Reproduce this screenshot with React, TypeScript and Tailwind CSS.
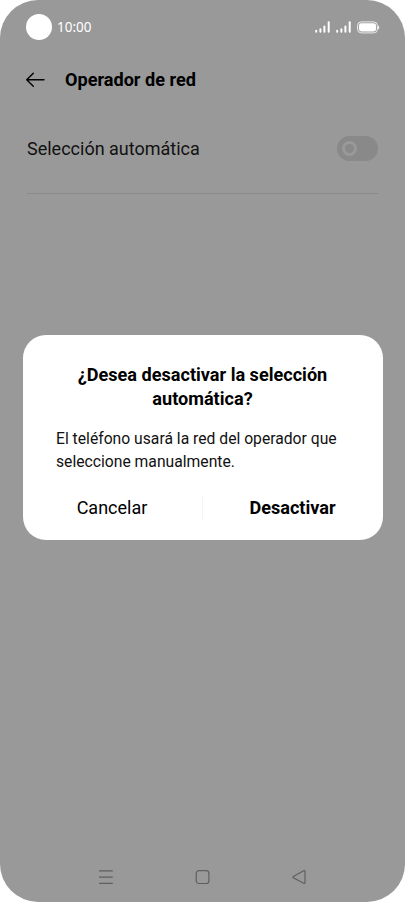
import type { ReactNode } from 'react'

const SignalIcon = () => (
  <svg width="16" height="12" viewBox="0 0 16 12" stroke="#fff" strokeWidth="2" strokeLinecap="round">
    <path d="M1.2 9.8v1M5.4 8.2v2.6M9.4 5.6v5.2" />
    <path d="M13.7 1.2v9.6" />
  </svg>
)

const BatteryIcon = () => (
  <svg width="23" height="13" viewBox="0 0 23 13" fill="none">
    <rect x="0.5" y="0.9" width="20" height="11" rx="3.8" stroke="#fff" strokeOpacity="0.8" strokeWidth="1" />
    <rect x="1.9" y="2.3" width="17.2" height="8.2" rx="2.4" fill="#fff" />
    <path d="M21.2 4.4c1.4.8 1.4 3.2 0 4z" fill="#fff" />
  </svg>
)

const StatusBar = () => (
  <div className="flex h-[54px] items-center pr-[25px] pl-[26px]">
    <span className="size-[26px] rounded-full bg-white" />
    <span className="ml-[5px] font-['Noto_Sans',sans-serif] text-[13.5px] leading-5 text-white">
      10:00
    </span>
    <div className="ml-auto flex items-center">
      <SignalIcon />
      <span className="w-[5px]" />
      <SignalIcon />
      <span className="w-[5px]" />
      <BatteryIcon />
    </div>
  </div>
)

const Header = () => (
  <header className="flex h-[50px] items-center pl-[25px]">
    <svg className="mt-px" width="20" height="16" viewBox="0 0 20 16" fill="none" stroke="#000" strokeWidth="1.4" strokeLinecap="round" strokeLinejoin="round">
      <path d="M19 7.8H1.7M8.3 1.2 1.7 7.8l6.6 6.4" />
    </svg>
    <h1 className="mt-0.5 ml-5 text-[18.1px] font-bold text-black">Operador de red</h1>
  </header>
)

const Toggle = () => (
  <span className="flex h-[25px] w-[41px] items-center rounded-full bg-[#898989] pl-[5px]">
    <span className="size-[15px] rounded-full border-[3px] border-[#999]" />
  </span>
)

const NavBar = () => (
  <nav className="mt-auto flex h-[50px] items-center justify-between px-[98px]">
    <svg width="16" height="16" viewBox="0 0 16 16" stroke="#5f5f5f" strokeWidth="1.3">
      <path d="M1 1.8h13.8M1 8.2h13.8M1 14.4h13.8" />
    </svg>
    <svg width="16" height="16" viewBox="0 0 16 16" fill="none" stroke="#5f5f5f" strokeWidth="1.2">
      <rect x="1.2" y="1.7" width="12.7" height="12.8" rx="2.8" />
    </svg>
    <svg width="16" height="16" viewBox="0 0 16 16" fill="none" stroke="#5f5f5f" strokeWidth="1.2" strokeLinejoin="round">
      <path d="M2.3 7.5 12.7 1.8q1.3-.5 1.3.9v10.8q0 1.4-1.3.8L2.3 8.8q-.9-.7 0-1.3z" />
    </svg>
  </nav>
)

const Dialog = ({ title, children }: { title: ReactNode; children: ReactNode }) => (
  <div className="absolute inset-x-[22.5px] top-[335px] h-[205px] rounded-[23px] bg-white pt-7">
    <h2 className="text-center text-[18.1px] leading-6 font-bold text-black">{title}</h2>
    <p className="mt-4 pl-[33.5px] text-[15.7px] leading-[23px] text-[#111]">{children}</p>
    <div className="mt-[22px] flex h-[25px] items-center text-[18px] text-black">
      <button className="w-[179px]">Cancelar</button>
      <span className="h-[25px] w-px bg-[#f5f5f5]" />
      <button className="w-[180px] text-[18.1px] font-bold">Desactivar</button>
    </div>
  </div>
)

export default function App() {
  return (
    <div className="bg-white font-[Roboto,sans-serif]">
      <main className="relative flex h-[902px] w-[405px] flex-col overflow-hidden rounded-[38px] bg-[#999]">
        <StatusBar />
        <Header />
        <div className="mx-[27px] flex h-[90px] items-center justify-between border-b border-[#8a8a8a]">
          <span className="text-[18px] text-[#111]">Selección automática</span>
          <Toggle />
        </div>
        <NavBar />
        <Dialog
          title={
            <>
              ¿Desea desactivar la selección
              <br />
              automática?
            </>
          }
        >
          El teléfono usará la red del operador que
          <br />
          seleccione manualmente.
        </Dialog>
      </main>
    </div>
  )
}
